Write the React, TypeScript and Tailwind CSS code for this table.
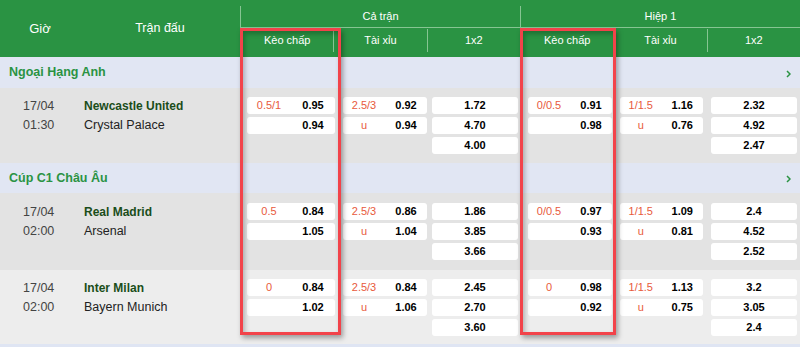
import React from 'react'

type Pair = [string, string]
type Match = {
	date: string
	time: string
	home: string
	away: string
	ftHc: Pair[]
	ftOu: Pair[]
	ft1x2: string[]
	h1Hc: Pair[]
	h1Ou: Pair[]
	h11x2: string[]
	pad: string
	bg: string
}

const font = { fontFamily: '"Liberation Sans", Arial, sans-serif' }

const matches: Match[] = [
	{
		date: '17/04',
		time: '01:30',
		home: 'Newcastle United',
		away: 'Crystal Palace',
		ftHc: [['0.5/1', '0.95'], ['', '0.94']],
		ftOu: [['2.5/3', '0.92'], ['u', '0.94']],
		ft1x2: ['1.72', '4.70', '4.00'],
		h1Hc: [['0/0.5', '0.91'], ['', '0.98']],
		h1Ou: [['1/1.5', '1.16'], ['u', '0.76']],
		h11x2: ['2.32', '4.92', '2.47'],
		pad: 'pt-[9px] pb-[9px]',
		bg: 'bg-[#e3e3e3]',
	},
	{
		date: '17/04',
		time: '02:00',
		home: 'Real Madrid',
		away: 'Arsenal',
		ftHc: [['0.5', '0.84'], ['', '1.05']],
		ftOu: [['2.5/3', '0.86'], ['u', '1.04']],
		ft1x2: ['1.86', '3.85', '3.66'],
		h1Hc: [['0/0.5', '0.97'], ['', '0.93']],
		h1Ou: [['1/1.5', '1.09'], ['u', '0.81']],
		h11x2: ['2.4', '4.52', '2.52'],
		pad: 'pt-[10px] pb-[10px]',
		bg: 'bg-[#e3e3e3]',
	},
	{
		date: '17/04',
		time: '02:00',
		home: 'Inter Milan',
		away: 'Bayern Munich',
		ftHc: [['0', '0.84'], ['', '1.02']],
		ftOu: [['2.5/3', '0.84'], ['u', '1.06']],
		ft1x2: ['2.45', '2.70', '3.60'],
		h1Hc: [['0', '0.98'], ['', '0.92']],
		h1Ou: [['1/1.5', '1.13'], ['u', '0.75']],
		h11x2: ['3.2', '3.05', '2.4'],
		pad: 'pt-[9px] pb-[8px]',
		bg: 'bg-[#ededed]',
	},
]

function PairBox({ rows }: { rows: Pair[] }) {
	return (
		<div className="flex flex-col gap-[3px]">
			{rows.map((r, i) => (
				<div key={i} className="flex h-[17px] items-center rounded-[3px] bg-white text-[11px]">
					<span className="flex-1 text-center text-[#e85a3c]">{r[0]}</span>
					<span className="flex-1 text-center font-bold text-black">{r[1]}</span>
				</div>
			))}
		</div>
	)
}

function OneXTwo({ vals }: { vals: string[] }) {
	return (
		<div className="flex flex-col gap-[3px]">
			{vals.map((v, i) => (
				<div key={i} className="flex h-[17px] items-center justify-center rounded-[3px] bg-white text-[11px] font-bold text-black">
					{v}
				</div>
			))}
		</div>
	)
}

function SubHead({ title }: { title: string }) {
	return (
		<div className="mt-[6px] flex w-[280px] flex-col border-l border-[#86c592]">
			<div className="flex h-[22px] items-center justify-center border-b border-[#86c592] text-[11px]">
				{title}
			</div>
			<div className="flex h-[29px]">
				<div className="flex flex-1 justify-center pt-[4px] text-[11px]">Kèo chấp</div>
				<div className="mt-[1px] mb-[5px] flex flex-1 justify-center border-l border-[#86c592] pt-[3px] text-[11px]">
					Tài xỉu
				</div>
				<div className="mt-[1px] mb-[5px] flex flex-1 justify-center border-l border-[#86c592] pt-[3px] text-[11px]">
					1x2
				</div>
			</div>
		</div>
	)
}

function League({ name, h }: { name: string; h: string }) {
	return (
		<div className={`flex items-center justify-between bg-[#e1e6f3] pl-[9px] pr-[9px] ${h}`}>
			<span className="text-[12.5px] font-bold text-[#2a9343]">{name}</span>
			<svg width="5" height="8" viewBox="0 0 5 8" className="mt-[2px]">
				<path d="M1 1l3 3-3 3" fill="none" stroke="#2a9343" strokeWidth="1.5" />
			</svg>
		</div>
	)
}

function MatchRow({ m }: { m: Match }) {
	return (
		<div className={`flex ${m.bg} ${m.pad}`}>
			<div className="flex w-[240px]">
				<div className="flex w-[84px] flex-col pl-[23px] text-[12.5px] text-[#444]">
					<span className="flex h-[18px] items-center">{m.date}</span>
					<span className="flex h-[20px] items-center">{m.time}</span>
				</div>
				<div className="flex flex-col text-[12.5px]">
					<span className="flex h-[18px] items-center text-[12px] font-bold text-[#1a4d1a]">{m.home}</span>
					<span className="flex h-[20px] items-center text-[#222]">{m.away}</span>
				</div>
			</div>
			<div className="w-[99px] pl-[7px] pr-[4px]">
				<PairBox rows={m.ftHc} />
			</div>
			<div className="w-[90px] pl-[4px] pr-[2px]">
				<PairBox rows={m.ftOu} />
			</div>
			<div className="w-[91px] pl-[3px] pr-[2px]">
				<OneXTwo vals={m.ft1x2} />
			</div>
			<div className="w-[96px] pl-[8px] pr-[4px]">
				<PairBox rows={m.h1Hc} />
			</div>
			<div className="w-[91px] pl-[4px] pr-[4px]">
				<PairBox rows={m.h1Ou} />
			</div>
			<div className="w-[93px] pl-[4px] pr-[3px]">
				<OneXTwo vals={m.h11x2} />
			</div>
		</div>
	)
}

export default function App() {
	return (
		<div className="relative h-[349px] w-[800px] overflow-hidden bg-white" style={font}>
			{/* header */}
			<div className="flex h-[57px] bg-[#2a9343] text-white">
				<div className="flex w-[80px] items-center justify-center text-[13px]">Giờ</div>
				<div className="flex w-[160px] items-center justify-center text-[12.5px]">Trận đấu</div>
				<SubHead title="Cả trận" />
				<SubHead title="Hiệp 1" />
			</div>

			<League name="Ngoại Hạng Anh" h="h-[31px]" />
			<MatchRow m={matches[0]} />
			<League name="Cúp C1 Châu Âu" h="h-[30px]" />
			<MatchRow m={matches[1]} />
			<MatchRow m={matches[2]} />
			<div className="h-[3px] bg-[#dfe5f3]" />

			{/* highlight frames */}
			<div className="absolute left-[240px] top-[28px] h-[307px] w-[101px] border-[3px] border-[#f2434a] shadow-[2px_3px_5px_rgba(0,0,0,0.35),inset_2px_3px_5px_rgba(0,0,0,0.25)]" />
			<div className="absolute left-[520px] top-[28px] h-[307px] w-[96px] border-[3px] border-[#f2434a] shadow-[2px_3px_5px_rgba(0,0,0,0.35),inset_2px_3px_5px_rgba(0,0,0,0.25)]" />
		</div>
	)
}
